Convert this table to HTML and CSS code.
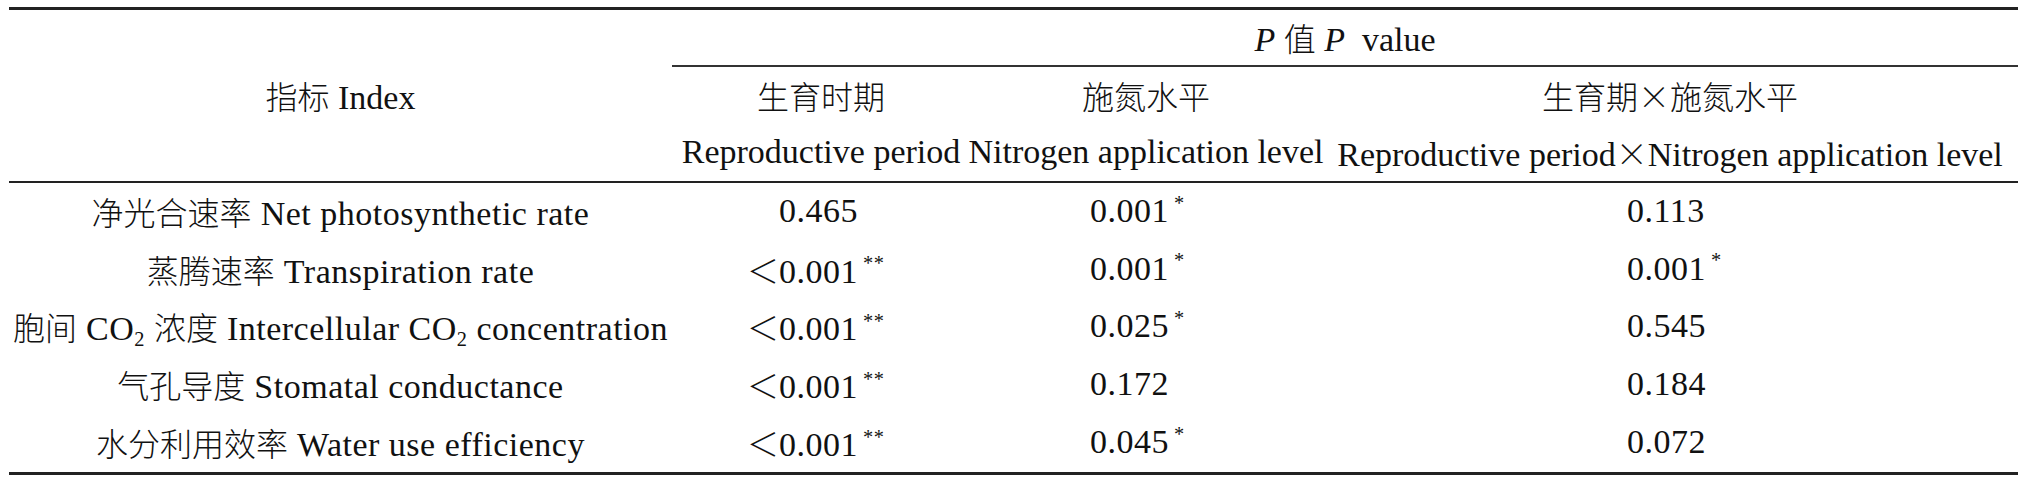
FILE: index.html
```html
<!DOCTYPE html>
<html lang="zh-CN">
<head>
<meta charset="utf-8">
<title>P 值 P value</title>
<link rel="stylesheet" href="styles.css">
</head>
<body>
<div class="tbl">
  <div class="c idx"><span class="t"><span class="zh">指标</span> Index</span></div>
  <div class="c pval"><span class="t"><i>P</i> <span class="zh">值</span> <i>P</i>&nbsp; value</span></div>

  <div class="c"><span class="t zh">生育时期</span></div>
  <div class="c"><span class="t zh">施氮水平</span></div>
  <div class="c"><span class="t zh">生育期×施氮水平</span></div>

  <div class="c hb"><span class="t">Reproductive period</span></div>
  <div class="c hb"><span class="t">Nitrogen application level</span></div>
  <div class="c hb"><span class="t">Reproductive period<span class="zh">×</span>Nitrogen application level</span></div>

  <div class="c"><span class="t lbl"><span class="zh">净光合速率</span> Net photosynthetic rate</span></div>
  <div class="c"><span class="v v2">0.465</span></div>
  <div class="c"><span class="v v3">0.001<sup>*</sup></span></div>
  <div class="c"><span class="v v4">0.113</span></div>

  <div class="c"><span class="t lbl"><span class="zh">蒸腾速率</span> Transpiration rate</span></div>
  <div class="c"><span class="v v2"><span class="lt zh">＜</span>0.001<sup>**</sup></span></div>
  <div class="c"><span class="v v3">0.001<sup>*</sup></span></div>
  <div class="c"><span class="v v4">0.001<sup>*</sup></span></div>

  <div class="c"><span class="t lbl"><span class="zh">胞间</span> CO<sub>2</sub> <span class="zh">浓度</span> Intercellular CO<sub>2</sub> concentration</span></div>
  <div class="c"><span class="v v2"><span class="lt zh">＜</span>0.001<sup>**</sup></span></div>
  <div class="c"><span class="v v3">0.025<sup>*</sup></span></div>
  <div class="c"><span class="v v4">0.545</span></div>

  <div class="c"><span class="t lbl"><span class="zh">气孔导度</span> Stomatal conductance</span></div>
  <div class="c"><span class="v v2"><span class="lt zh">＜</span>0.001<sup>**</sup></span></div>
  <div class="c"><span class="v v3">0.172</span></div>
  <div class="c"><span class="v v4">0.184</span></div>

  <div class="c"><span class="t lbl"><span class="zh">水分利用效率</span> Water use efficiency</span></div>
  <div class="c"><span class="v v2"><span class="lt zh">＜</span>0.001<sup>**</sup></span></div>
  <div class="c"><span class="v v3">0.045<sup>*</sup></span></div>
  <div class="c"><span class="v v4">0.072</span></div>
</div>
</body>
</html>
```

FILE: styles.css
```css
html, body {
  margin: 0;
  padding: 0;
  background: #ffffff;
}

body {
  font-family: "Liberation Serif", "Noto Sans CJK SC", serif;
  font-size: 34px;
  font-weight: 400;
  color: #111111;
}

.tbl {
  margin: 7px 0 0 9px;
  width: 2009px;
  display: grid;
  grid-template-columns: 663px 298px 352px 696px;
  grid-template-rows: 57px 58px 58px repeat(5, 57.8px);
  border-top: 3px solid #222222;
  border-bottom: 3px solid #222222;
}

.c {
  display: flex;
  align-items: center;
  justify-content: center;
  white-space: nowrap;
  box-sizing: border-box;
  padding-bottom: 2px;
}

.t {
  display: block;
}

.lbl {
  letter-spacing: 0.5px;
}

.zh {
  font-family: "Noto Sans CJK SC", sans-serif;
  font-weight: 300;
  font-size: 32px;
  letter-spacing: 0;
}

.idx {
  grid-row: 1 / 4;
  grid-column: 1;
  border-bottom: 2px solid #222222;
}

.pval {
  grid-column: 2 / 5;
  border-bottom: 2px solid #333333;
}

.hb {
  border-bottom: 2px solid #222222;
}

.v {
  display: inline-block;
  text-align: left;
  letter-spacing: 0.5px;
}

.v2 { width: 84px; }
.v3 { width: 112px; }
.v4 { width: 86px; }

.lt {
  margin-left: -1em;
}

sup {
  font-size: 0.6em;
  line-height: 0;
  vertical-align: 0.6em;
  margin-left: 5px;
}

sub {
  font-size: 0.6em;
  line-height: 0;
  vertical-align: -0.3em;
}
```
